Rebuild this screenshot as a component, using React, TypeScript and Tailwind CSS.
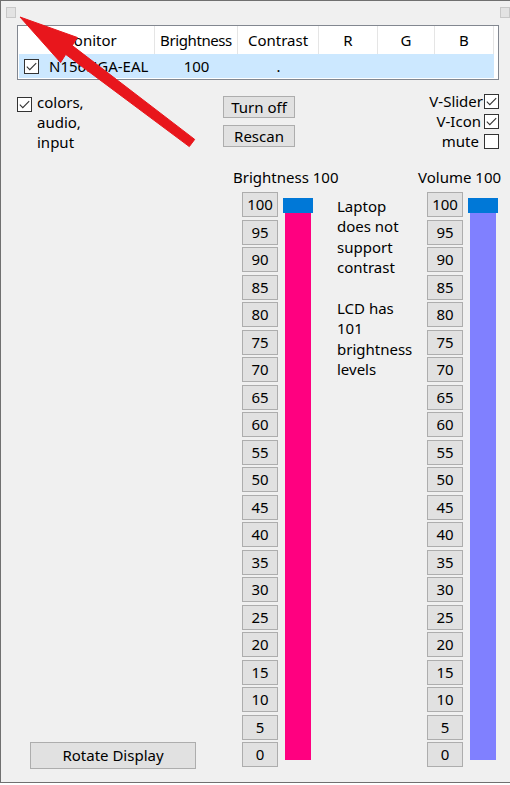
import React from "react";

const font = { fontFamily: '"Noto Sans", "Open Sans", sans-serif' };

const levels = [100, 95, 90, 85, 80, 75, 70, 65, 60, 55, 50, 45, 40, 35, 30, 25, 20, 15, 10, 5, 0];

function Check({ checked }: { checked?: boolean }) {
    return (
        <span className="flex h-[15px] w-[15px] shrink-0 items-center justify-center border border-[#333] bg-white">
            {checked && (
                <svg width="11" height="9" viewBox="0 0 11 9" fill="none">
                    <path d="M0.8 4.6 L3.8 7.6 L10.2 1.2" stroke="#333" strokeWidth="1.1" />
                </svg>
            )}
        </span>
    );
}

function LevelColumn({ label, bar }: { label: string; bar: string }) {
    return (
        <div className="flex w-[71px] shrink-0 flex-col">
            <div className="ml-[-9px] h-[25px] whitespace-nowrap leading-[20px]">{label}</div>
            <div className="flex gap-[5px]">
                {/* preset buttons */}
                <div className="flex h-[575px] w-[36px] flex-col justify-between">
                    {levels.map((n) => (
                        <div
                            key={n}
                            className="flex h-[25px] items-center justify-center border border-[#adadad] bg-[#e1e1e1]"
                        >
                            {n}
                        </div>
                    ))}
                </div>
                {/* slider */}
                <div className="flex w-[30px] flex-col pt-[6px]">
                    <div className="h-[15px] bg-[#0078d7]" />
                    <div className={"mx-[2px] h-[547px] " + bar} />
                </div>
            </div>
        </div>
    );
}

export default function App() {
    return (
        <div className="relative h-[785px] w-[510px] overflow-hidden bg-white" style={font}>
            <div className="flex h-[783px] flex-col border-b border-l border-t border-[#707070] bg-[#f0f0f0] text-[15px] text-black">
                {/* top handles */}
                <div className="flex justify-between pl-[5px] pt-[6px]">
                    <div className="h-[11px] w-[10px] border border-[#c8c8c8] bg-[#e3e3e3]" />
                    <div className="h-[11px] w-[10px] border border-[#c8c8c8] bg-[#e3e3e3]" />
                </div>

                {/* monitor table */}
                <div className="ml-[16px] mt-[7px] h-[55px] w-[482px] border border-[#828790] bg-white">
                    <div className="flex h-[28px] items-center">
                        <div className="flex h-full w-[137px] items-center justify-center border-r border-[#e5e5e5] pl-[5px]">Monitor</div>
                        <div className="flex h-full w-[83px] items-center justify-center border-r border-[#e5e5e5] tracking-[-0.4px]">Brightness</div>
                        <div className="flex h-full w-[81px] items-center justify-center border-r border-[#e5e5e5]">Contrast</div>
                        <div className="flex h-full w-[59px] items-center justify-center border-r border-[#e5e5e5]">R</div>
                        <div className="flex h-full w-[57px] items-center justify-center border-r border-[#e5e5e5]">G</div>
                        <div className="flex h-full w-[59px] items-center justify-center border-r border-[#e5e5e5]">B</div>
                    </div>
                    <div className="ml-[1px] flex h-[24px] w-[475px] items-center bg-[#cce8ff]">
                        <div className="flex w-[136px] items-center gap-[10px] pl-[5px]">
                            <Check checked />
                            <span>N156HGA-EAL</span>
                        </div>
                        <div className="w-[83px] text-center">100</div>
                        <div className="w-[81px] text-center">.</div>
                    </div>
                </div>

                {/* options */}
                <div className="mt-[14px] flex h-[57px]">
                    <div className="flex w-[222px] shrink-0 items-start gap-[5px] pl-[16px] pt-[3px]">
                        <Check checked />
                        <div className="mt-[-5px] leading-[20px]">
                            colors,
                            <br />
                            audio,
                            <br />
                            input
                        </div>
                    </div>
                    <div className="flex flex-col gap-[7px] pt-[2px]">
                        <div className="flex h-[22px] w-[72px] items-center justify-center border border-[#adadad] bg-[#e1e1e1]">Turn off</div>
                        <div className="flex h-[22px] w-[72px] items-center justify-center border border-[#adadad] bg-[#e1e1e1]">Rescan</div>
                    </div>
                    <div className="ml-auto mr-[11px] flex flex-col items-end gap-[5px]">
                        <div className="flex h-[15px] items-center gap-[1px]">
                            V-Slider <Check checked />
                        </div>
                        <div className="flex h-[15px] items-center gap-[3px]">
                            V-Icon <Check checked />
                        </div>
                        <div className="flex h-[15px] items-center gap-[5px]">
                            mute <Check />
                        </div>
                    </div>
                </div>

                {/* sliders */}
                <div className="mt-[16px] flex">
                    <div className="flex w-[241px] shrink-0 flex-col justify-end pl-[29px]">
                        <div className="mb-[-2px] flex h-[27px] w-[166px] items-center justify-center border border-[#adadad] bg-[#e1e1e1]">
                            Rotate Display
                        </div>
                    </div>
                    <LevelColumn label="Brightness 100" bar="bg-[#ff0080]" />
                    <div className="w-[114px] shrink-0 pl-[24px] pt-[29px] leading-[20.4px]">
                        Laptop
                        <br />
                        does not
                        <br />
                        support
                        <br />
                        contrast
                        <br />
                        <br />
                        LCD has
                        <br />
                        101
                        <br />
                        brightness
                        <br />
                        levels
                    </div>
                    <LevelColumn label="Volume 100" bar="bg-[#8080ff]" />
                </div>
            </div>

            {/* annotation arrow */}
            <svg className="pointer-events-none absolute left-0 top-0" width="510" height="785" viewBox="0 0 510 785">
                <polygon
                    points="20,17 77.4,37.5 72.3,45.6 194.7,139.4 189.3,146.6 65.7,54.4 60.6,62.5"
                    fill="#e8161c"
                    stroke="#e8161c"
                    strokeWidth="1"
                    strokeLinejoin="round"
                />
            </svg>
        </div>
    );
}
